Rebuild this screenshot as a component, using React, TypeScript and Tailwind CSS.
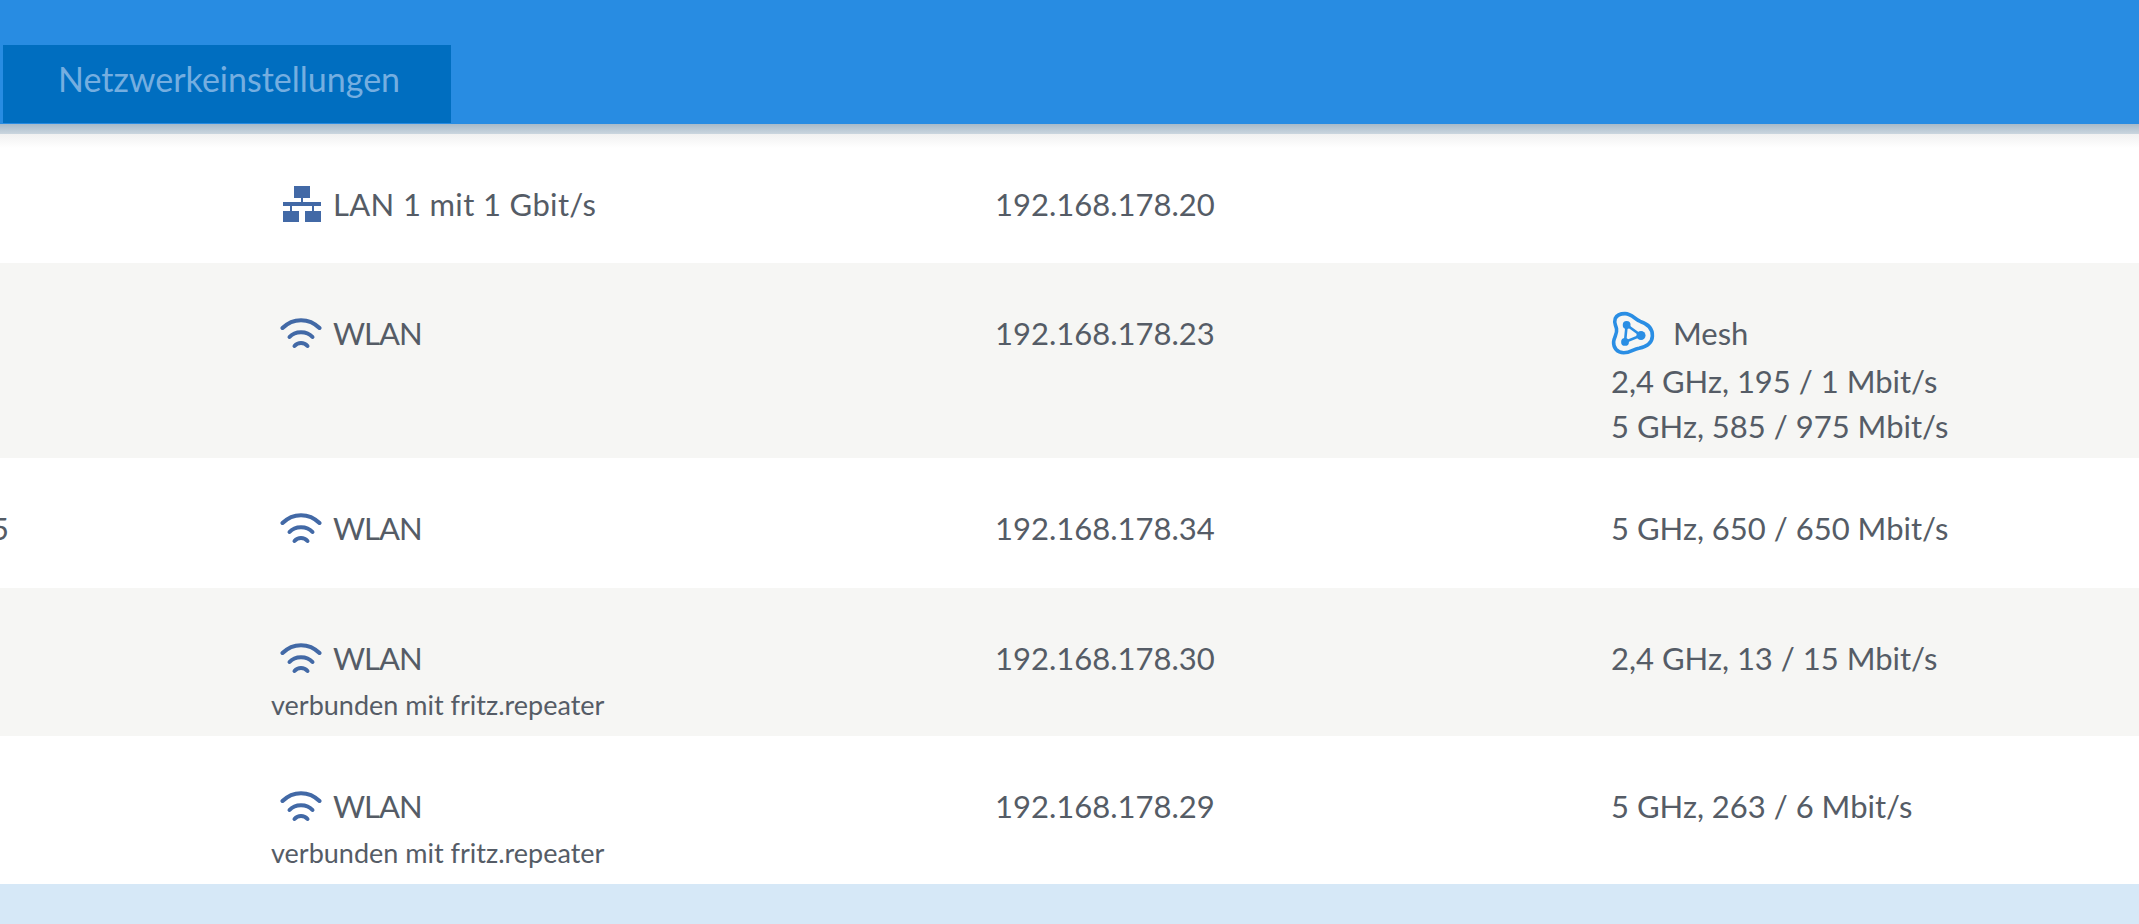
const textFont = "font-['Lato','Noto_Sans',sans-serif]";

function WifiIcon() {
  return (
    <svg width="44" height="34" viewBox="0 0 44 34" fill="none" stroke="#4269a6" strokeWidth="4" strokeLinecap="round">
      <path d="M2.5 12 C13 1.5, 29 1.5, 39.5 12" />
      <path d="M9.5 21 C15 14.5, 27 14.5, 32.5 21" />
      <path d="M14.5 30 C18 26, 24 26, 27.5 30" />
    </svg>
  );
}

function LanIcon() {
  return (
    <svg width="38" height="36" viewBox="0 0 38 36" fill="#4269a6">
      <rect x="11" y="0" width="16" height="12" />
      <rect x="18" y="12" width="2" height="4" />
      <rect x="0" y="16" width="38" height="4" />
      <rect x="7" y="20" width="2" height="5" />
      <rect x="29" y="20" width="2" height="5" />
      <rect x="0" y="25" width="16" height="11" />
      <rect x="22" y="25" width="16" height="11" />
    </svg>
  );
}

function MeshIcon() {
  return (
    <svg width="44" height="44" viewBox="60 45 135 135" fill="none" className="shrink-0">
      <path
        d="M103 53 C124 53 132 70 150 77 C172 84 188 98 187 122 C186 146 166 155 146 159 C128 162 120 173 99 173 C79 173 67 158 68 140 C69 124 80 116 77 100 C74 86 68 82 73 68 C78 57 91 53 103 53 Z"
        stroke="#2a8ee4"
        strokeWidth="11"
      />
      <path d="M108 88 L152 120 L103 140 Z" stroke="#2a8ee4" strokeWidth="8" />
      <circle cx="108" cy="88" r="12" fill="#2a8ee4" />
      <circle cx="152" cy="120" r="14" fill="#2a8ee4" />
      <circle cx="103" cy="140" r="12" fill="#2a8ee4" />
    </svg>
  );
}

type Device = {
  first?: string;
  type: "lan" | "wifi";
  connection: string;
  via?: string;
  ip: string;
  mesh?: boolean;
  speeds: string[];
  height: string;
  bg: string;
};

const devices: Device[] = [
  { type: "lan", connection: "LAN 1 mit 1 Gbit/s", ip: "192.168.178.20", speeds: [], height: "h-[129px]", bg: "bg-[linear-gradient(#f1f1f1,#ffffff_14px)]" },
  { type: "wifi", connection: "WLAN", ip: "192.168.178.23", mesh: true, speeds: ["2,4 GHz, 195 / 1 Mbit/s", "5 GHz, 585 / 975 Mbit/s"], height: "h-[195px]", bg: "bg-[#f6f6f4]" },
  { first: "5", type: "wifi", connection: "WLAN", ip: "192.168.178.34", speeds: ["5 GHz, 650 / 650 Mbit/s"], height: "h-[130px]", bg: "bg-white" },
  { type: "wifi", connection: "WLAN", via: "verbunden mit fritz.repeater", ip: "192.168.178.30", speeds: ["2,4 GHz, 13 / 15 Mbit/s"], height: "h-[148px]", bg: "bg-[#f6f6f4]" },
  { type: "wifi", connection: "WLAN", via: "verbunden mit fritz.repeater", ip: "192.168.178.29", speeds: ["5 GHz, 263 / 6 Mbit/s"], height: "h-[148px]", bg: "bg-white" },
];

function Row({ device }: { device: Device }) {
  const isLan = device.type === "lan";
  return (
    <div className={`grid grid-cols-[271px_724px_617px_1fr] pt-[48px] overflow-hidden ${device.height} ${device.bg}`}>
      <div className="leading-[44px] -ml-[9px]">{device.first}</div>
      <div>
        <div className="flex items-center h-[44px] pl-[9px] gap-[9px]">
          <div className="flex w-[44px] justify-center shrink-0">{isLan ? <LanIcon /> : <WifiIcon />}</div>
          <span className={isLan ? "tracking-[0.35px]" : "tracking-[-1px]"}>{device.connection}</span>
        </div>
        {device.via && <div className="text-[27px] leading-[44px] mt-[3px]">{device.via}</div>}
      </div>
      <div className="leading-[44px]">{device.ip}</div>
      <div className="leading-[45px] -ml-px">
        {device.mesh && (
          <div className="flex items-center gap-[18px] h-[44px] mb-[4px]">
            <MeshIcon />
            <span>Mesh</span>
          </div>
        )}
        {device.speeds.map((s) => (
          <div key={s}>{s}</div>
        ))}
      </div>
    </div>
  );
}

export default function App() {
  return (
    <div className={`w-[2139px] h-[924px] overflow-hidden bg-[#d6e8f7] text-[#555c66] text-[31px] ${textFont}`}>
      <header className="h-[124px] bg-[#288ce2] pt-[45px] pl-[3px]">
        <div className="flex items-center h-[78px] w-[448px] bg-[#006ec0] pl-[55px] pb-[11px] text-[34px] text-[#75aee0]">
          Netzwerkeinstellungen
        </div>
      </header>
      <main>
        <div className="h-[10px] bg-gradient-to-b from-[#a8bac9] to-[#cbd6df]" />
        {devices.map((d) => (
          <Row key={d.ip} device={d} />
        ))}
      </main>
    </div>
  );
}
